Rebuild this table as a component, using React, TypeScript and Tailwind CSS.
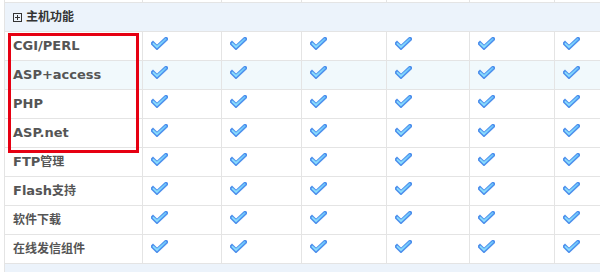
import React from "react";

const colWidths = [79, 80, 85, 83, 85, 85];

const features: { label: React.ReactNode; hover?: boolean }[] = [
  { label: "CGI/PERL" },
  { label: "ASP+access", hover: true },
  { label: "PHP" },
  { label: "ASP.net" },
  { label: <>FTP<span className="text-[12px]">管理</span></> },
  { label: <>Flash<span className="text-[12px]">支持</span></> },
  { label: <span className="text-[12px]">软件下载</span> },
  { label: <span className="text-[12px]">在线发信组件</span> },
];

function Check() {
  return (
    <svg width="17" height="13" viewBox="0 0 17 13" className="block">
      <defs>
        <linearGradient id="chk" x1="0" y1="1" x2="1" y2="0">
          <stop offset="0" stopColor="#8fe3ff" />
          <stop offset="1" stopColor="#6cc4fb" />
        </linearGradient>
      </defs>
      <path
        d="M2 6.5 L6 10.5 L15 2"
        fill="none"
        stroke="#4d8fec"
        strokeWidth="4.2"
        strokeLinejoin="miter"
        strokeLinecap="square"
      />
      <path
        d="M2.6 6.8 L6 10 L14.5 2.3"
        fill="none"
        stroke="url(#chk)"
        strokeWidth="1.8"
        strokeLinecap="square"
      />
    </svg>
  );
}

function PlusBox() {
  return (
    <span className="inline-flex w-[9px] h-[9px] border border-[#333] relative items-center justify-center">
      <span className="absolute w-[5px] h-px bg-[#333]" />
      <span className="absolute w-px h-[5px] bg-[#333]" />
    </span>
  );
}

export default function App() {
  return (
    <div
      className="relative w-[600px] h-[272px] overflow-hidden bg-white"
      style={{ fontFamily: '"DejaVu Sans", "Noto Sans CJK SC", sans-serif' }}
    >
      <div className="ml-[4px] w-[700px] border-l border-[#e4e4e4]">
        {/* tail of the previous section */}
        <div className="flex h-[3px] border-b border-[#e4e4e4]">
          <div className="w-[138px] border-r border-[#e4e4e4]" />
          {colWidths.map((w, i) => (
            <div key={i} className="border-r border-[#e4e4e4]" style={{ width: w }} />
          ))}
        </div>

        {/* section header */}
        <div className="flex items-center h-[29px] border-b border-[#e4e4e4] bg-[#ecf3fb] pl-[8px] gap-[4px]">
          <PlusBox />
          <span className="text-[12px] font-bold text-[#333] leading-none">主机功能</span>
        </div>

        {features.map((f, r) => (
          <div
            key={r}
            className={`flex h-[29px] border-b border-[#e4e4e4] ${f.hover ? "bg-[#f1f9fc]" : "bg-white"}`}
          >
            <div className="w-[138px] shrink-0 border-r border-[#e4e4e4] flex items-center pl-[8px] text-[13px] font-bold text-[#555]">
              {f.label}
            </div>
            {colWidths.map((w, i) => (
              <div
                key={i}
                className="shrink-0 border-r border-[#e4e4e4] pl-[8px] pt-[5px]"
                style={{ width: w }}
              >
                <Check />
              </div>
            ))}
          </div>
        ))}

        {/* next section header */}
        <div className="h-[20px] bg-[#ecf3fb]" />
      </div>

      {/* red annotation frame */}
      <div className="absolute left-[8px] top-[33px] w-[131px] h-[120px] border-[3px] border-[#e60012]" />
    </div>
  );
}
